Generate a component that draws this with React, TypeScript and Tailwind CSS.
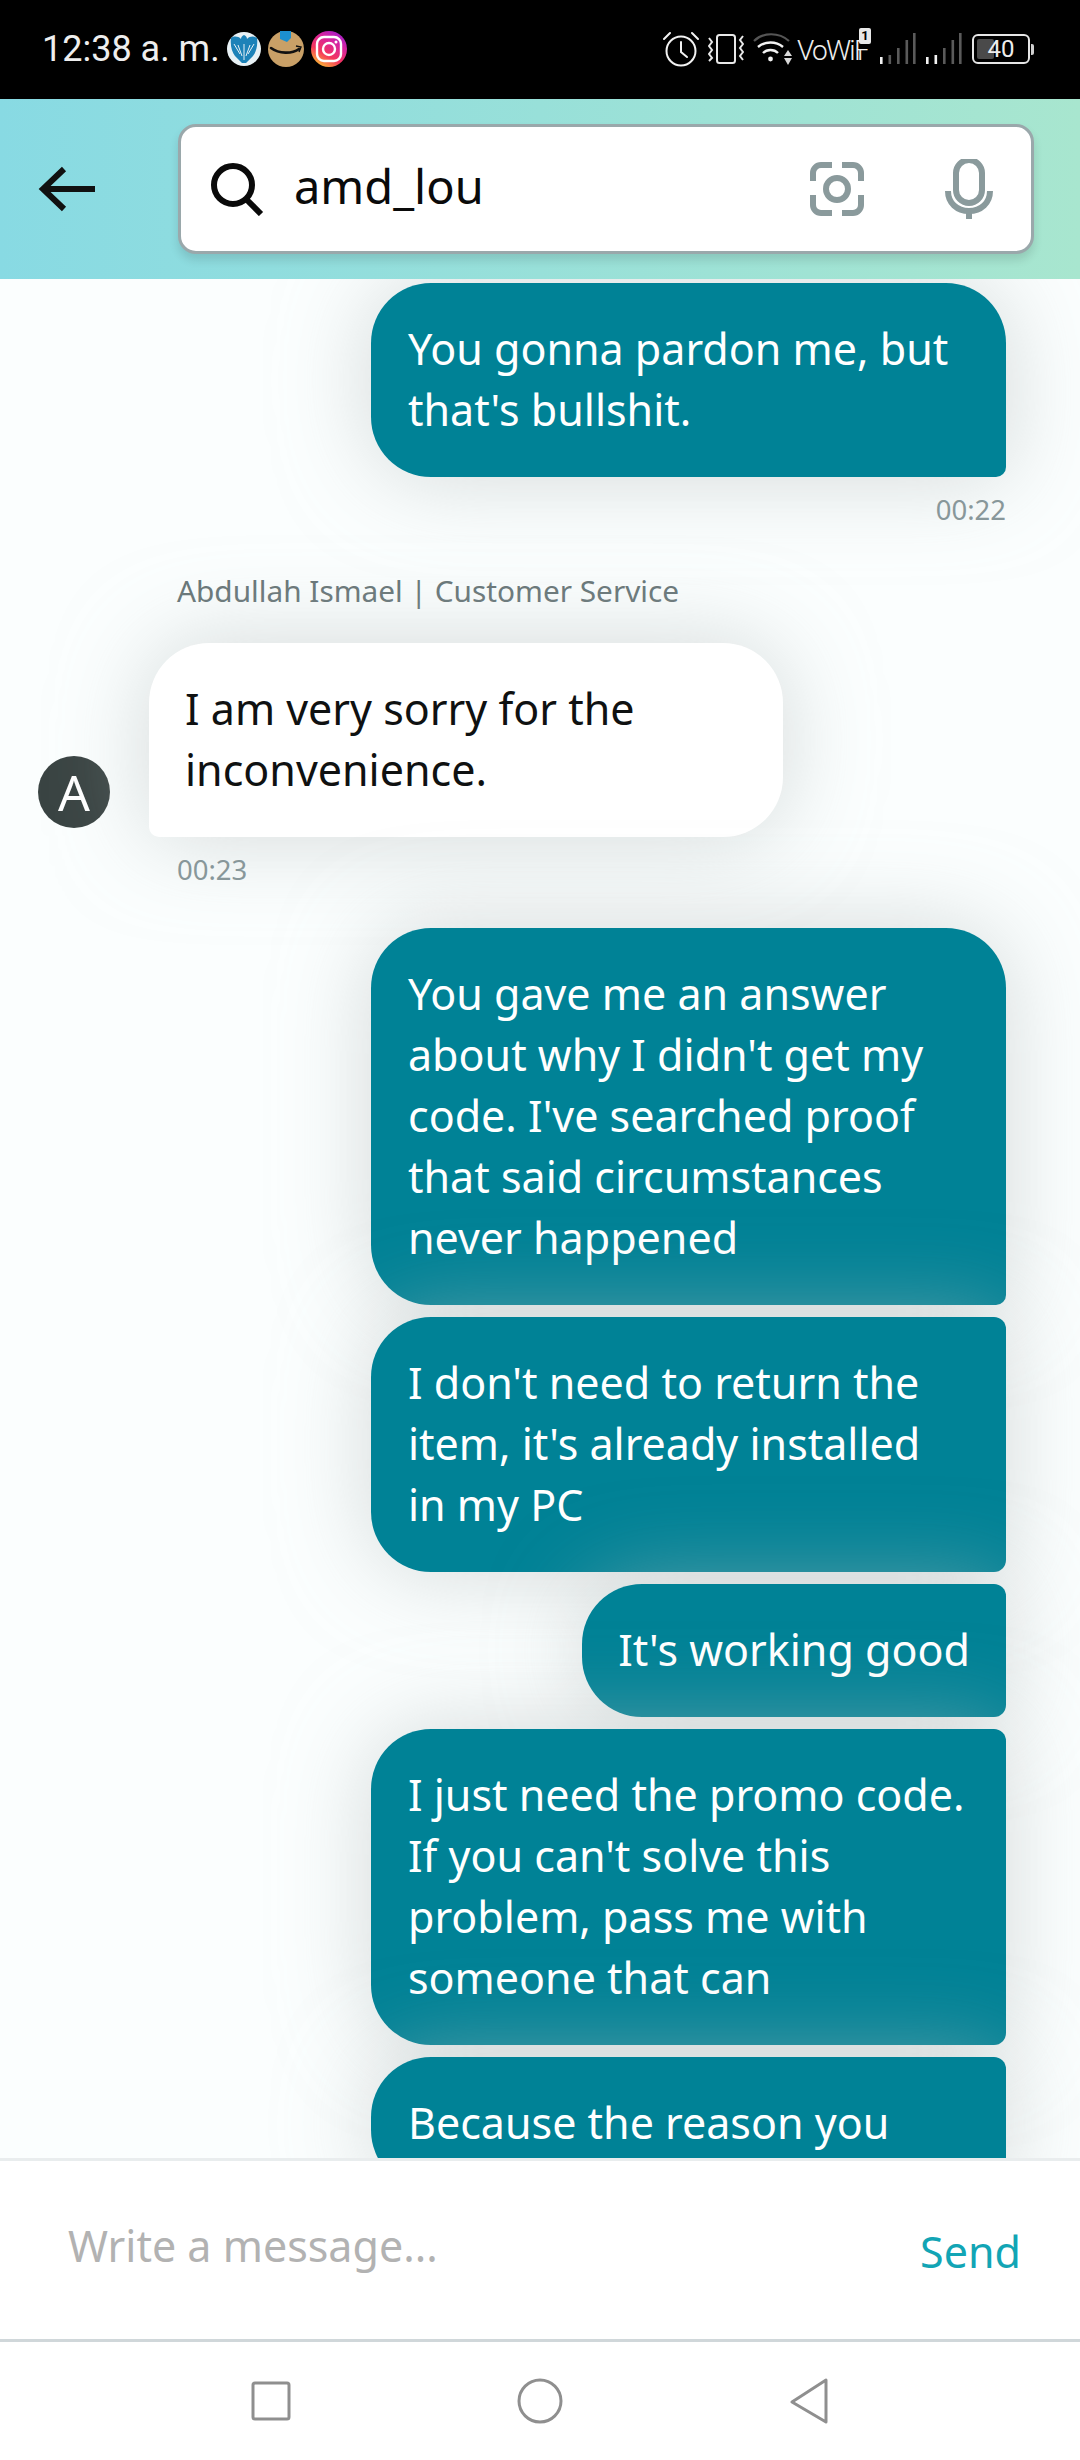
const font = { fontFamily: '"Noto Sans", sans-serif' };
const roboto = { fontFamily: 'Roboto, sans-serif' };

function Alarm() {
  return (
    <svg width="36" height="36" viewBox="0 0 36 36" fill="none" stroke="#f2f2f2" strokeWidth="2" strokeLinecap="round" className="block">
      <circle cx="18" cy="20" r="14.5" />
      <path d="M18 11v10l6 5" />
      <path d="M1 8l6-6M35 8l-6-6" />
    </svg>
  );
}

function Vibrate() {
  return (
    <svg width="36" height="32" viewBox="0 0 36 32" fill="none" stroke="#e8e8e8" strokeWidth="2" className="block">
      <rect x="9" y="2" width="18" height="28" rx="2.5" />
      <path d="M1 5l3 4-3 4 3 4-3 4 3 4-3 3M35 3l-3 4 3 4-3 4 3 4-3 4 3 4" />
    </svg>
  );
}

function Wifi() {
  return (
    <svg width="40" height="34" viewBox="0 0 40 34" fill="none" className="block">
      <path d="M1 9C10 0 26 0 36 9" stroke="#555" strokeWidth="2.2" />
      <path d="M5 15c7-6 18-6 25 0M10 21c4-4 11-4 15 0" stroke="#f2f2f2" strokeWidth="2.4" />
      <circle cx="17.5" cy="27" r="2.4" fill="#f2f2f2" />
      <path d="M35 18l4 6h-8zM35 33l4-7h-8z" fill="#d8d8d8" />
    </svg>
  );
}

function Signal({ lit }: { lit: number }) {
  const bars = [
    { x: 0, h: 7 },
    { x: 8.5, h: 9 },
    { x: 17, h: 16 },
    { x: 25.5, h: 24 },
    { x: 33, h: 31 },
  ];
  return (
    <svg width="36" height="31" viewBox="0 0 36 31" className="block">
      {bars.map((b, i) => (
        <rect key={b.x} x={b.x} y={31 - b.h} width="2.6" height={b.h} fill={i < lit ? '#f2f2f2' : '#5a5a5a'} />
      ))}
    </svg>
  );
}

function Battery() {
  return (
    <div className="relative h-[30px] w-[58px] rounded-[6px] border-2 border-[#e6e6e6]">
      <div className="absolute inset-y-[3px] left-[3px] w-[17px] rounded-[2px] bg-[#4a4a4a]" />
      <div className="absolute right-[-6px] top-[8px] h-[11px] w-[3px] rounded-r-[2px] bg-[#cfcfcf]" />
      <div className="absolute inset-0 flex items-center justify-center text-[24px] leading-none text-[#eeeeee]" style={roboto}>40</div>
    </div>
  );
}

function NotificationIcons() {
  return (
    <div className="ml-[7px] flex items-center gap-[7px]">
      <svg width="34" height="34" viewBox="0 0 34 34" className="block">
        <circle cx="17" cy="17" r="17" fill="#e8f1f5" />
        <path d="M17 3c2 1 3 2 3 4 3-3 7-3 10-1 1 8-1 14-4 18l-7 7h-4l-7-7C5 20 3 14 4 6c3-2 7-2 10 1 0-2 1-3 3-4z" fill="#1d82b8" />
        <path d="M17 12v16M11 13l4 11M23 13l-4 11M7 12l6 10M27 12l-6 10" stroke="#e8f1f5" strokeWidth="1" />
      </svg>
      <svg width="36" height="36" viewBox="0 0 36 36" className="block">
        <circle cx="18" cy="18" r="18" fill="#c9a067" />
        <path d="M12 0h11v7l-4 4-7-3z" fill="#1c8fcf" />
        <path d="M3 17c8 6 21 6 28 1" stroke="#111" strokeWidth="2.6" fill="none" strokeLinecap="round" />
        <path d="M28 15l5 1-2 5" stroke="#111" strokeWidth="1.4" fill="none" />
      </svg>
      <svg width="36" height="36" viewBox="0 0 36 36" className="block">
        <defs>
          <linearGradient id="ig" x1="0.2" y1="1" x2="0.8" y2="0">
            <stop offset="0" stopColor="#fdc830" />
            <stop offset="0.35" stopColor="#f5365c" />
            <stop offset="0.7" stopColor="#d6249f" />
            <stop offset="1" stopColor="#a01fd0" />
          </linearGradient>
        </defs>
        <circle cx="18" cy="18" r="18" fill="url(#ig)" />
        <rect x="6" y="6" width="24" height="24" rx="7" fill="none" stroke="#fff" strokeWidth="2.4" />
        <circle cx="18" cy="18" r="6" fill="none" stroke="#fff" strokeWidth="2.4" />
        <circle cx="25" cy="11" r="1.5" fill="#fff" />
      </svg>
    </div>
  );
}

function StatusBar() {
  return (
    <div className="flex h-[99px] shrink-0 items-center justify-between bg-black pb-[2px] pl-[42px] pr-[50px]">
      <div className="flex items-center">
        <span className="text-[36px] leading-none text-[#eeeeee]" style={roboto}>12:38 a. m.</span>
        <NotificationIcons />
      </div>
      <div className="flex items-center">
        <Alarm />
        <div className="ml-[9px]"><Vibrate /></div>
        <div className="ml-[9px]"><Wifi /></div>
        <div className="relative ml-[4px] h-[34px] w-[63px]">
          <span className="absolute bottom-0 left-0 whitespace-nowrap text-[28px] font-light leading-[30px] tracking-[-1.7px] text-[#eeeeee]" style={roboto}>VoWiF</span>
          <span className="absolute bottom-0 left-[60px] text-[28px] font-light leading-[30px] text-[#eeeeee]" style={{ ...roboto, clipPath: 'inset(14px 0 0 0)' }}>i</span>
          <span className="absolute right-[-11px] top-[-4px] flex h-[16px] w-[12px] items-center justify-center rounded-[2px] bg-[#e8e8e8] text-[13px] font-bold leading-none text-black" style={roboto}>1</span>
        </div>
        <div className="ml-[20px]"><Signal lit={1} /></div>
        <div className="ml-[10px]"><Signal lit={2} /></div>
        <div className="ml-[10px]"><Battery /></div>
      </div>
    </div>
  );
}

function SearchHeader() {
  return (
    <div className="flex h-[180px] shrink-0 items-center bg-[linear-gradient(90deg,#88dae3,#a8e6cf)] pl-[38px] pr-[46px]">
      <svg width="57" height="48" viewBox="0 0 57 48" fill="none" stroke="#111" strokeWidth="6" className="block">
        <path d="M57 24H6M26 4L5 24l21 20" />
      </svg>
      <div className="ml-[83px] flex h-[130px] flex-1 items-center rounded-[18px] border-[3px] border-[#9aa8ab] bg-white pl-[29px] pr-[38px] shadow-[0_6px_10px_rgba(0,0,0,0.12)]">
        <svg width="54" height="54" viewBox="0 0 54 54" fill="none" stroke="#0a0a0a" strokeWidth="6" className="block">
          <circle cx="23" cy="23" r="19" />
          <path d="M36 37l15 15" />
        </svg>
        <span className="-mt-[5px] ml-[30px] flex-1 text-[47px] leading-none text-[#0a0a0a]" style={font}>amd_lou</span>
        <svg width="54" height="54" viewBox="0 0 54 54" fill="none" stroke="#8a9a9c" strokeWidth="6" className="block">
          <path d="M3 19V11a8 8 0 0 1 8-8h11M32 3h11a8 8 0 0 1 8 8v8M51 33v10a8 8 0 0 1-8 8H32M22 51H11a8 8 0 0 1-8-8V33" />
          <circle cx="27" cy="27" r="11" />
        </svg>
        <svg width="48" height="60" viewBox="0 0 48 60" className="ml-[81px] block">
          <rect x="11" y="1" width="26" height="43" rx="13" fill="none" stroke="#8a9a9c" strokeWidth="6" />
          <path d="M3 32c0 12 9 20 21 20s21-8 21-20" fill="none" stroke="#8a9a9c" strokeWidth="6" />
          <rect x="21" y="50" width="6" height="10" fill="#8a9a9c" />
        </svg>
      </div>
    </div>
  );
}

function Outgoing({ lines, first, small }: { lines: string[]; first?: boolean; small?: boolean }) {
  return (
    <div
      className={`shrink-0 bg-[#008296] pb-[37px] pt-[35px] text-[43px] leading-[61px] text-white shadow-[0_0_90px_rgba(180,188,188,0.55)] ${
        first ? 'rounded-[60px_60px_10px_60px]' : 'rounded-[60px_12px_12px_60px]'
      } ${small ? 'pl-[36px] pr-[36px]' : 'w-[635px] pl-[37px]'}`}
      style={font}
    >
      {lines.map((l) => (
        <div key={l} className="whitespace-nowrap">{l}</div>
      ))}
    </div>
  );
}

function Messages() {
  return (
    <div className="flex min-h-0 flex-1 flex-col overflow-hidden bg-[#fbfefe] pr-[74px] pt-[4px]">
      <div className="flex flex-col items-end">
        <Outgoing first lines={["You gonna pardon me, but", "that's bullshit."]} />
        <div className="mt-[16px] text-[27.5px] leading-[34px] text-[#88979a]" style={font}>00:22</div>
      </div>

      <div className="mt-[46px] pl-[177px] text-[29.8px] leading-[36px] text-[#687678]" style={font}>Abdullah Ismael | Customer Service</div>

      <div className="mt-[34px] flex shrink-0 items-end pl-[38px]">
        <div className="mb-[9px] flex h-[72px] w-[72px] items-center justify-center rounded-full bg-[#3a4443] text-[50px] leading-none text-white" style={font}>A</div>
        <div className="ml-[39px] w-[634px] rounded-[60px_60px_60px_10px] bg-white pb-[37px] pt-[35px] pl-[36px] text-[43px] leading-[61px] text-[#0f1111] shadow-[0_0_90px_rgba(180,188,188,0.55)]" style={font}>
          <div>I am very sorry for the</div>
          <div>inconvenience.</div>
        </div>
      </div>
      <div className="mt-[16px] pl-[177px] text-[27.5px] leading-[34px] text-[#88979a]" style={font}>00:23</div>

      <div className="mt-[41px] flex flex-col items-end gap-[12px]">
        <Outgoing first lines={["You gave me an answer", "about why I didn't get my", "code. I've searched proof", "that said circumstances", "never happened"]} />
        <Outgoing lines={["I don't need to return the", "item, it's already installed", "in my PC"]} />
        <Outgoing small lines={["It's working good"]} />
        <Outgoing lines={["I just need the promo code.", "If you can't solve this", "problem, pass me with", "someone that can"]} />
        <Outgoing lines={["Because the reason you"]} />
      </div>
    </div>
  );
}

function Composer() {
  return (
    <div className="flex h-[184px] shrink-0 items-center justify-between border-y-[3px] border-b-[#d0d7da] border-t-[#e9edee] bg-white pl-[68px] pr-[59px]">
      <span className="-mt-[10px] text-[43px] leading-none text-[#b2b2b2]" style={font}>Write a message...</span>
      <span className="mt-[2px] text-[43px] leading-none text-[#12a5b5]" style={font}>Send</span>
    </div>
  );
}

function NavBar() {
  return (
    <div className="flex h-[118px] shrink-0 items-center justify-center gap-[226px] bg-white">
      <svg width="40" height="40" viewBox="0 0 40 40" fill="none" stroke="#8f8f8f" strokeWidth="3" className="block"><rect x="2" y="2" width="36" height="36" rx="2" /></svg>
      <svg width="46" height="46" viewBox="0 0 46 46" fill="none" stroke="#8f8f8f" strokeWidth="3" className="block"><circle cx="23" cy="23" r="21" /></svg>
      <svg width="40" height="46" viewBox="0 0 40 46" fill="none" stroke="#8f8f8f" strokeWidth="3" strokeLinejoin="round" className="block"><path d="M37 2v42L3 24z" /></svg>
    </div>
  );
}

export default function App() {
  return (
    <div className="flex h-[2460px] w-[1080px] flex-col overflow-hidden bg-white">
      <StatusBar />
      <SearchHeader />
      <Messages />
      <Composer />
      <NavBar />
    </div>
  );
}
